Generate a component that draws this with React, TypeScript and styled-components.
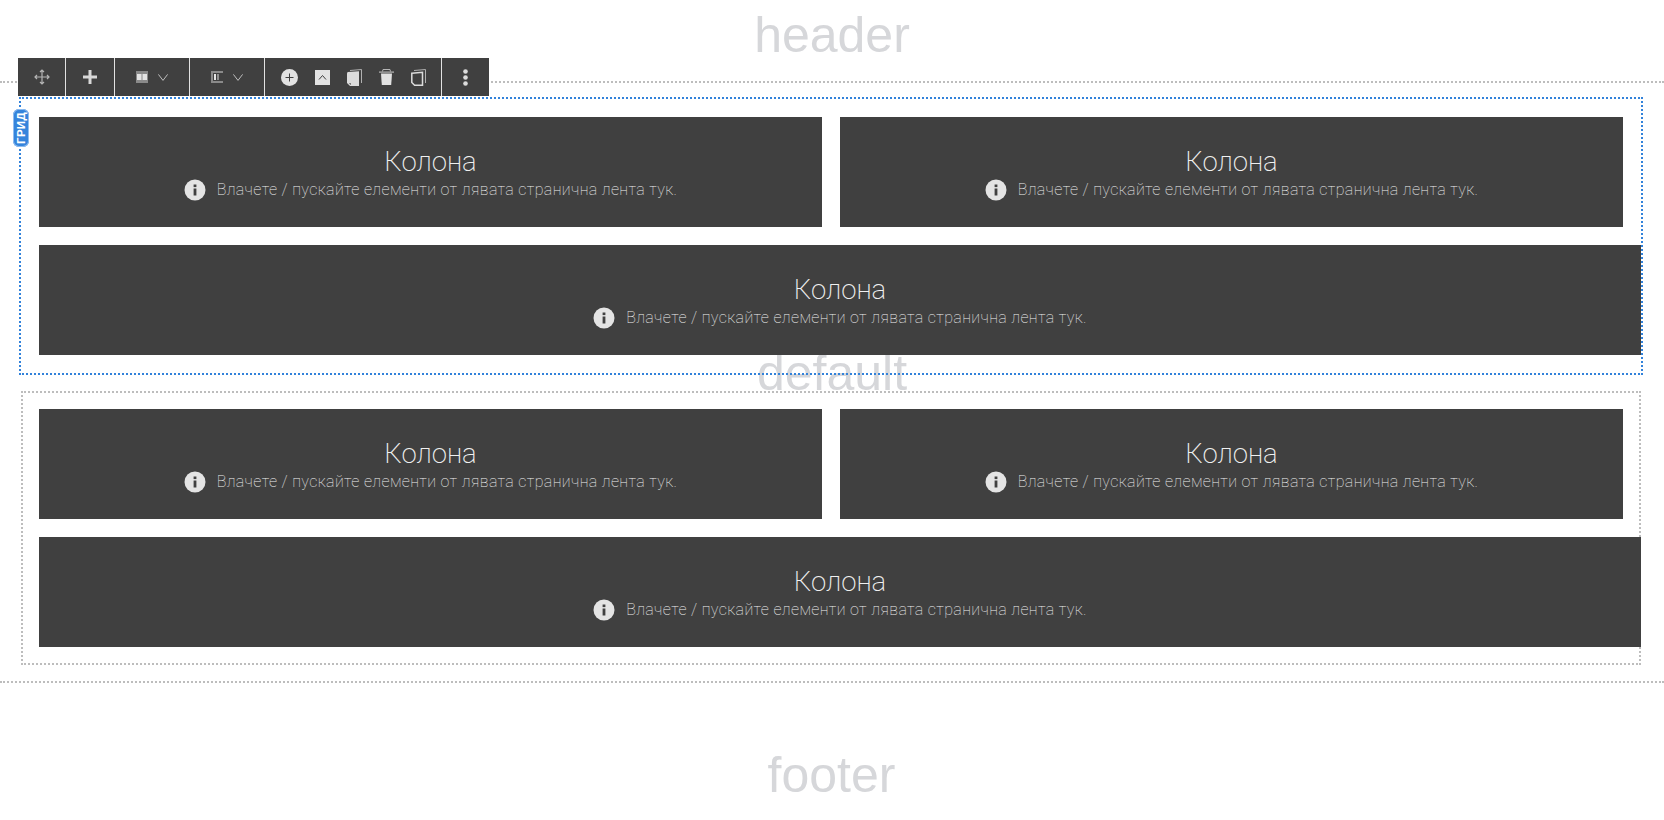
import React from "react";
import styled, { createGlobalStyle } from "styled-components";

const Global = createGlobalStyle`
  html, body { margin: 0; padding: 0; background: #fff; overflow: hidden; }
  body { font-family: Roboto, "Liberation Sans", sans-serif; }
  * { box-sizing: border-box; }
`;

const Page = styled.div`
  position: relative;
  width: 1664px;
  height: 820px;
  overflow: hidden;
`;

const Zone = styled.div<{ $h: number; $line?: boolean }>`
  height: ${(p) => p.$h}px;
  display: flex;
  justify-content: center;
  align-items: center;
  font-family: "Liberation Sans", Arial, sans-serif;
  font-size: 50px;
  color: #d6d7da;
  ${(p) => (p.$line ? "border-bottom: 2px dotted #bdbdbd;" : "")}
`;

const HeaderText = styled.span`
  margin-top: -12px;
`;

const FooterText = styled.span`
  margin-left: -1px;
  margin-top: 46px;
`;

const Content = styled.div`
  position: relative;
  height: 600px;
  border-bottom: 2px dotted #bdbdbd;
  padding: 14px 21px 0 19px;
  display: flex;
  flex-direction: column;
`;

const DefaultLabel = styled.div`
  position: absolute;
  left: 0;
  right: 0;
  top: 261px;
  text-align: center;
  font-family: "Liberation Sans", Arial, sans-serif;
  font-size: 50px;
  color: #d6d7da;
`;

const GridBox = styled.div<{ $active?: boolean }>`
  position: relative;
  border: 2px dotted ${(p) => (p.$active ? "#3282da" : "#bdbdbd")};
  height: ${(p) => (p.$active ? 278 : 274)}px;
  width: ${(p) => (p.$active ? 1624 : 1620)}px;
  margin-left: ${(p) => (p.$active ? 0 : 2)}px;
  margin-top: ${(p) => (p.$active ? 0 : 16)}px;
  padding: ${(p) => (p.$active ? "18px 0 0 18px" : "16px 0 0 16px")};
  display: grid;
  grid-template-columns: 783px 783px;
  grid-auto-rows: 110px;
  gap: 18px;
  align-content: start;
`;

const Column = styled.div<{ $wide?: boolean }>`
  background: #404040;
  color: #f0f0f0;
  display: flex;
  flex-direction: column;
  align-items: center;
  padding-top: 29px;
  ${(p) => (p.$wide ? "grid-column: 1 / 3; width: 1602px;" : "")}
`;

const ColumnTitle = styled.div`
  font-size: 27.5px;
  line-height: 31px;
  font-weight: 200;
`;

const Hint = styled.div`
  display: flex;
  align-items: center;
  gap: 11px;
  font-size: 16px;
  letter-spacing: 0.37px;
  line-height: 22px;
  font-weight: 250;
  margin-top: 2px;
`;

const GridTag = styled.div`
  position: absolute;
  left: -8px;
  top: 10px;
  width: 16px;
  height: 38px;
  border-radius: 6px;
  background: #3584dc;
  box-shadow: 0 0 0 1px #8fbdf0 inset;
  color: #fff;
  display: flex;
  align-items: center;
  justify-content: center;
`;

const GridTagText = styled.span`
  transform: rotate(-90deg);
  font-family: "Liberation Sans", Arial, sans-serif;
  font-size: 11.5px;
  letter-spacing: 0.3px;
  font-weight: 700;
  white-space: nowrap;
`;

const Toolbar = styled.div`
  position: absolute;
  left: 18px;
  top: 58px;
  height: 38px;
  display: flex;
  background: #404040;
  color: #dcdcdc;
`;

const ToolSection = styled.div<{ $w: number; $gap?: number; $last?: boolean }>`
  width: ${(p) => p.$w}px;
  height: 100%;
  display: flex;
  align-items: center;
  justify-content: center;
  gap: ${(p) => p.$gap ?? 0}px;
  ${(p) => (p.$last ? "" : "border-right: 1px solid #e2e2e2;")}
`;

const Svg = styled.svg`
  display: block;
  flex: none;
`;

const InfoIcon = () => (
  <Svg width="22" height="22" viewBox="0 0 22 22">
    <circle cx="11" cy="11" r="10.5" fill="#e4e4e4" />
    <rect x="9.6" y="9.5" width="2.8" height="7" fill="#404040" />
    <rect x="9.6" y="5.5" width="2.8" height="2.6" fill="#404040" />
  </Svg>
);

const Chevron = () => (
  <Svg width="10" height="7" viewBox="0 0 10 7">
    <path d="M.4.4L5 6.4 9.6.4" fill="none" stroke="#bdbdbd" strokeWidth="1" />
  </Svg>
);

const Cell = ({ wide }: { wide?: boolean }) => (
  <Column $wide={wide}>
    <ColumnTitle>Колона</ColumnTitle>
    <Hint>
      <InfoIcon />
      <span>Влачете / пускайте елементи от лявата странична лента тук.</span>
    </Hint>
  </Column>
);

const Cells = () => (
  <>
    <Cell />
    <Cell />
    <Cell wide />
  </>
);

export default function App() {
  return (
    <Page>
      <Global />
      <Zone $h={83} $line>
        <HeaderText>header</HeaderText>
      </Zone>
      <Content>
        <DefaultLabel>default</DefaultLabel>
        <GridBox $active>
          <GridTag>
            <GridTagText>ГРИД</GridTagText>
          </GridTag>
          <Cells />
        </GridBox>
        <GridBox>
          <Cells />
        </GridBox>
      </Content>
      <Zone $h={137}>
        <FooterText>footer</FooterText>
      </Zone>
      <Toolbar>
        <ToolSection $w={48}>
          <Svg width="16" height="16" viewBox="0 0 16 16" fill="none" stroke="#b5b5b5" strokeWidth="1.2">
            <path d="M8 1v14M1 8h14M6 3l2-2 2 2M6 13l2 2 2-2M3 6L1 8l2 2M13 6l2 2-2 2" />
          </Svg>
        </ToolSection>
        <ToolSection $w={49}>
          <Svg width="14" height="14" viewBox="0 0 14 14">
            <path d="M5.5 0h3v5.5H14v3H8.500V14h-3V8.500H0v-3h5.500z" fill="#d8d8d8" />
          </Svg>
        </ToolSection>
        <ToolSection $w={75} $gap={10}>
          <Svg width="12" height="12" viewBox="0 0 12 12">
            <rect width="12" height="12" fill="#8a8a8a" />
            <rect x="1" y="3" width="4.500" height="6" fill="#e4e4e4" />
            <rect x="6.500" y="3" width="4.500" height="6" fill="#e4e4e4" />
          </Svg>
          <Chevron />
        </ToolSection>
        <ToolSection $w={75} $gap={10}>
          <Svg width="12" height="12" viewBox="0 0 12 12">
            <path d="M0 0h12v2H2v8h10v2H0z" fill="#8a8a8a" />
            <rect x="3" y="3" width="2" height="6" fill="#e4e4e4" />
            <rect x="6" y="3" width="2" height="6" fill="#8f8f8f" />
          </Svg>
          <Chevron />
        </ToolSection>
        <ToolSection $w={177} $gap={17}>
          <Svg width="17" height="17" viewBox="0 0 17 17">
            <circle cx="8.500" cy="8.500" r="8.500" fill="#e2e2e2" />
            <path d="M8.500 4.500v8M4.500 8.500h8" stroke="#404040" strokeWidth="1" />
          </Svg>
          <Svg width="15" height="15" viewBox="0 0 15 15">
            <rect width="15" height="15" fill="#e2e2e2" />
            <path d="M4 9.500l3.500-4 3.500 4" fill="none" stroke="#404040" strokeWidth="1" />
          </Svg>
          <Svg width="15" height="17" viewBox="0 0 15 17">
            <path d="M3 1.500L14.500 .5V14" fill="none" stroke="#b0b0b0" strokeWidth="1" />
            <path d="M0 4.500Q0 3.200 1 3L12 2.300V17H3L0 14z" fill="#dcdcdc" />
            <path d="M2 14.200l1.800 1.800v-1.800z" fill="#404040" />
          </Svg>
          <Svg width="15" height="16" viewBox="0 0 15 16">
            <rect x="0" y="2.500" width="15" height="1.200" fill="#b5b5b5" />
            <path d="M3.500 2.500L4 .5h7l.5 2" fill="none" stroke="#b5b5b5" strokeWidth="1" />
            <path d="M2 4.500h11l-.8 11.500H2.800z" fill="#e2e2e2" />
          </Svg>
          <Svg width="15" height="17" viewBox="0 0 15 17">
            <path d="M3 1.500L14.500 .5V14" fill="none" stroke="#b0b0b0" strokeWidth="1" />
            <path d="M.8 4.200L11.500 3.300V16.200H3.600L.8 13.500z" fill="none" stroke="#dcdcdc" strokeWidth="1.500" />
          </Svg>
        </ToolSection>
        <ToolSection $w={47} $last>
          <Svg width="5" height="17" viewBox="0 0 5 17">
            <circle cx="2.500" cy="2.500" r="2.300" fill="#dcdcdc" />
            <circle cx="2.500" cy="8.500" r="2.300" fill="#dcdcdc" />
            <circle cx="2.500" cy="14.500" r="2.300" fill="#dcdcdc" />
          </Svg>
        </ToolSection>
      </Toolbar>
    </Page>
  );
}
